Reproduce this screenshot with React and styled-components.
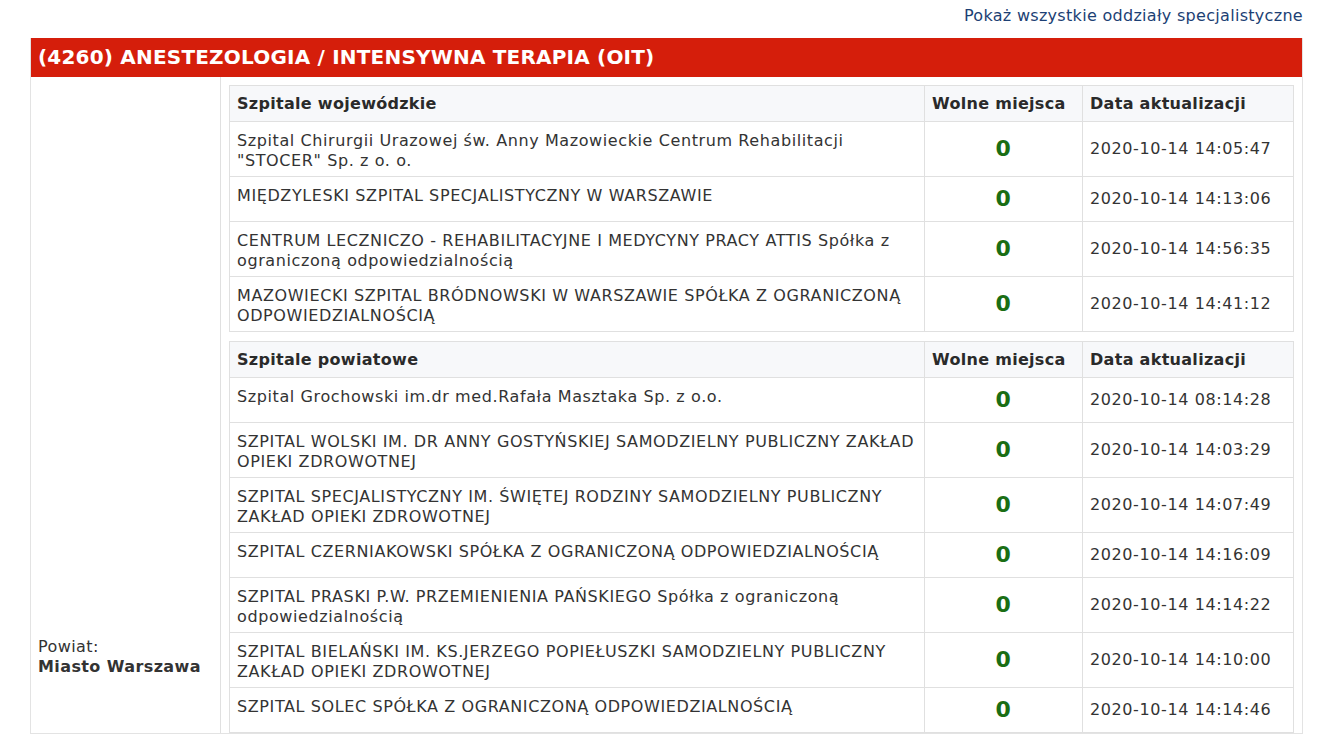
import React from 'react';
import styled, { createGlobalStyle } from 'styled-components';

const Global = createGlobalStyle`
  html, body { margin: 0; padding: 0; background: #fff; }
  body { font-family: "DejaVu Sans", Verdana, sans-serif; color: #333; }
`;

const Page = styled.div`
  padding: 5px 22px 0 30px;
`;

const TopLink = styled.a`
  display: block;
  text-align: right;
  color: #1c3f74;
  font-size: 16px;
  letter-spacing: 0.3px;
  text-decoration: none;
  line-height: 22px;
  margin-bottom: 11px;
`;

const Section = styled.div`
  border: 1px solid #e3e3e3;
  border-top: none;
`;

const Title = styled.h2`
  margin: 0;
  background: #d51e0b;
  color: #fff;
  font-size: 20px;
  font-weight: bold;
  height: 39px;
  line-height: 39px;
  padding: 0 7px;
  letter-spacing: 0.2px;
`;

const Body = styled.div`
  display: grid;
  grid-template-columns: 190px 1fr;
`;

const Region = styled.div`
  border-right: 1px solid #e0e0e0;
  display: flex;
  flex-direction: column;
  justify-content: flex-end;
  padding: 0 7px 56px;
  font-size: 16px;
  letter-spacing: 0.4px;
  line-height: 20px;
  b { font-weight: bold; }
`;

const Tables = styled.div`
  padding: 8px 8px 0 8px;
  display: flex;
  flex-direction: column;
  gap: 9px;
`;

const Table = styled.table`
  width: 100%;
  border-collapse: collapse;
  font-size: 16px;
  letter-spacing: 0.6px;
  th, td { border: 1px solid #e0e0e0; padding: 0 7px; text-align: left; }
  th { background: #f7f8fa; height: 35px; font-weight: bold; color: #2a2a2a; letter-spacing: 0.3px; }
  td { height: 44px; line-height: 20px; }
`;

const NameCell = styled.td`
  vertical-align: top;
  padding-top: 9px !important;
  height: ${p => (p.$two ? 55 : 43)}px !important;
  box-sizing: border-box;
`;

const Count = styled.td`
  width: 143px;
  text-align: center !important;
  color: #1a6e14;
  font-weight: bold;
  font-size: 22px;
`;

const DateCell = styled.td`
  width: 196px;
  color: #333;
`;

const voiv = [
  ['Szpital Chirurgii Urazowej św. Anny Mazowieckie Centrum Rehabilitacji "STOCER" Sp. z o. o.', '2020-10-14 14:05:47', 1],
  ['MIĘDZYLESKI SZPITAL SPECJALISTYCZNY W WARSZAWIE', '2020-10-14 14:13:06', 0],
  ['CENTRUM LECZNICZO - REHABILITACYJNE I MEDYCYNY PRACY ATTIS Spółka z ograniczoną odpowiedzialnością', '2020-10-14 14:56:35', 1],
  ['MAZOWIECKI SZPITAL BRÓDNOWSKI W WARSZAWIE SPÓŁKA Z OGRANICZONĄ ODPOWIEDZIALNOŚCIĄ', '2020-10-14 14:41:12', 1],
];

const county = [
  ['Szpital Grochowski im.dr med.Rafała Masztaka Sp. z o.o.', '2020-10-14 08:14:28', 0],
  ['SZPITAL WOLSKI IM. DR ANNY GOSTYŃSKIEJ SAMODZIELNY PUBLICZNY ZAKŁAD OPIEKI ZDROWOTNEJ', '2020-10-14 14:03:29', 1],
  ['SZPITAL SPECJALISTYCZNY IM. ŚWIĘTEJ RODZINY SAMODZIELNY PUBLICZNY ZAKŁAD OPIEKI ZDROWOTNEJ', '2020-10-14 14:07:49', 1],
  ['SZPITAL CZERNIAKOWSKI SPÓŁKA Z OGRANICZONĄ ODPOWIEDZIALNOŚCIĄ', '2020-10-14 14:16:09', 0],
  ['SZPITAL PRASKI P.W. PRZEMIENIENIA PAŃSKIEGO Spółka z ograniczoną odpowiedzialnością', '2020-10-14 14:14:22', 1],
  ['SZPITAL BIELAŃSKI IM. KS.JERZEGO POPIEŁUSZKI SAMODZIELNY PUBLICZNY ZAKŁAD OPIEKI ZDROWOTNEJ', '2020-10-14 14:10:00', 1],
  ['SZPITAL SOLEC SPÓŁKA Z OGRANICZONĄ ODPOWIEDZIALNOŚCIĄ', '2020-10-14 14:14:46', 0],
];

const HospitalTable = ({ label, rows }) => (
  <Table>
    <thead>
      <tr>
        <th>{label}</th>
        <th>Wolne miejsca</th>
        <th>Data aktualizacji</th>
      </tr>
    </thead>
    <tbody>
      {rows.map(([name, date, two]) => (
        <tr key={name}>
          <NameCell $two={two}>{name}</NameCell>
          <Count>0</Count>
          <DateCell>{date}</DateCell>
        </tr>
      ))}
    </tbody>
  </Table>
);

export default function App() {
  return (
    <Page>
      <Global />
      <TopLink href="#">Pokaż wszystkie oddziały specjalistyczne</TopLink>
      <Section>
        <Title>(4260) ANESTEZOLOGIA / INTENSYWNA TERAPIA (OIT)</Title>
        <Body>
          <Region>
            <span>Powiat:</span>
            <b>Miasto Warszawa</b>
          </Region>
          <Tables>
            <HospitalTable label="Szpitale wojewódzkie" rows={voiv} />
            <HospitalTable label="Szpitale powiatowe" rows={county} />
          </Tables>
        </Body>
      </Section>
    </Page>
  );
}
